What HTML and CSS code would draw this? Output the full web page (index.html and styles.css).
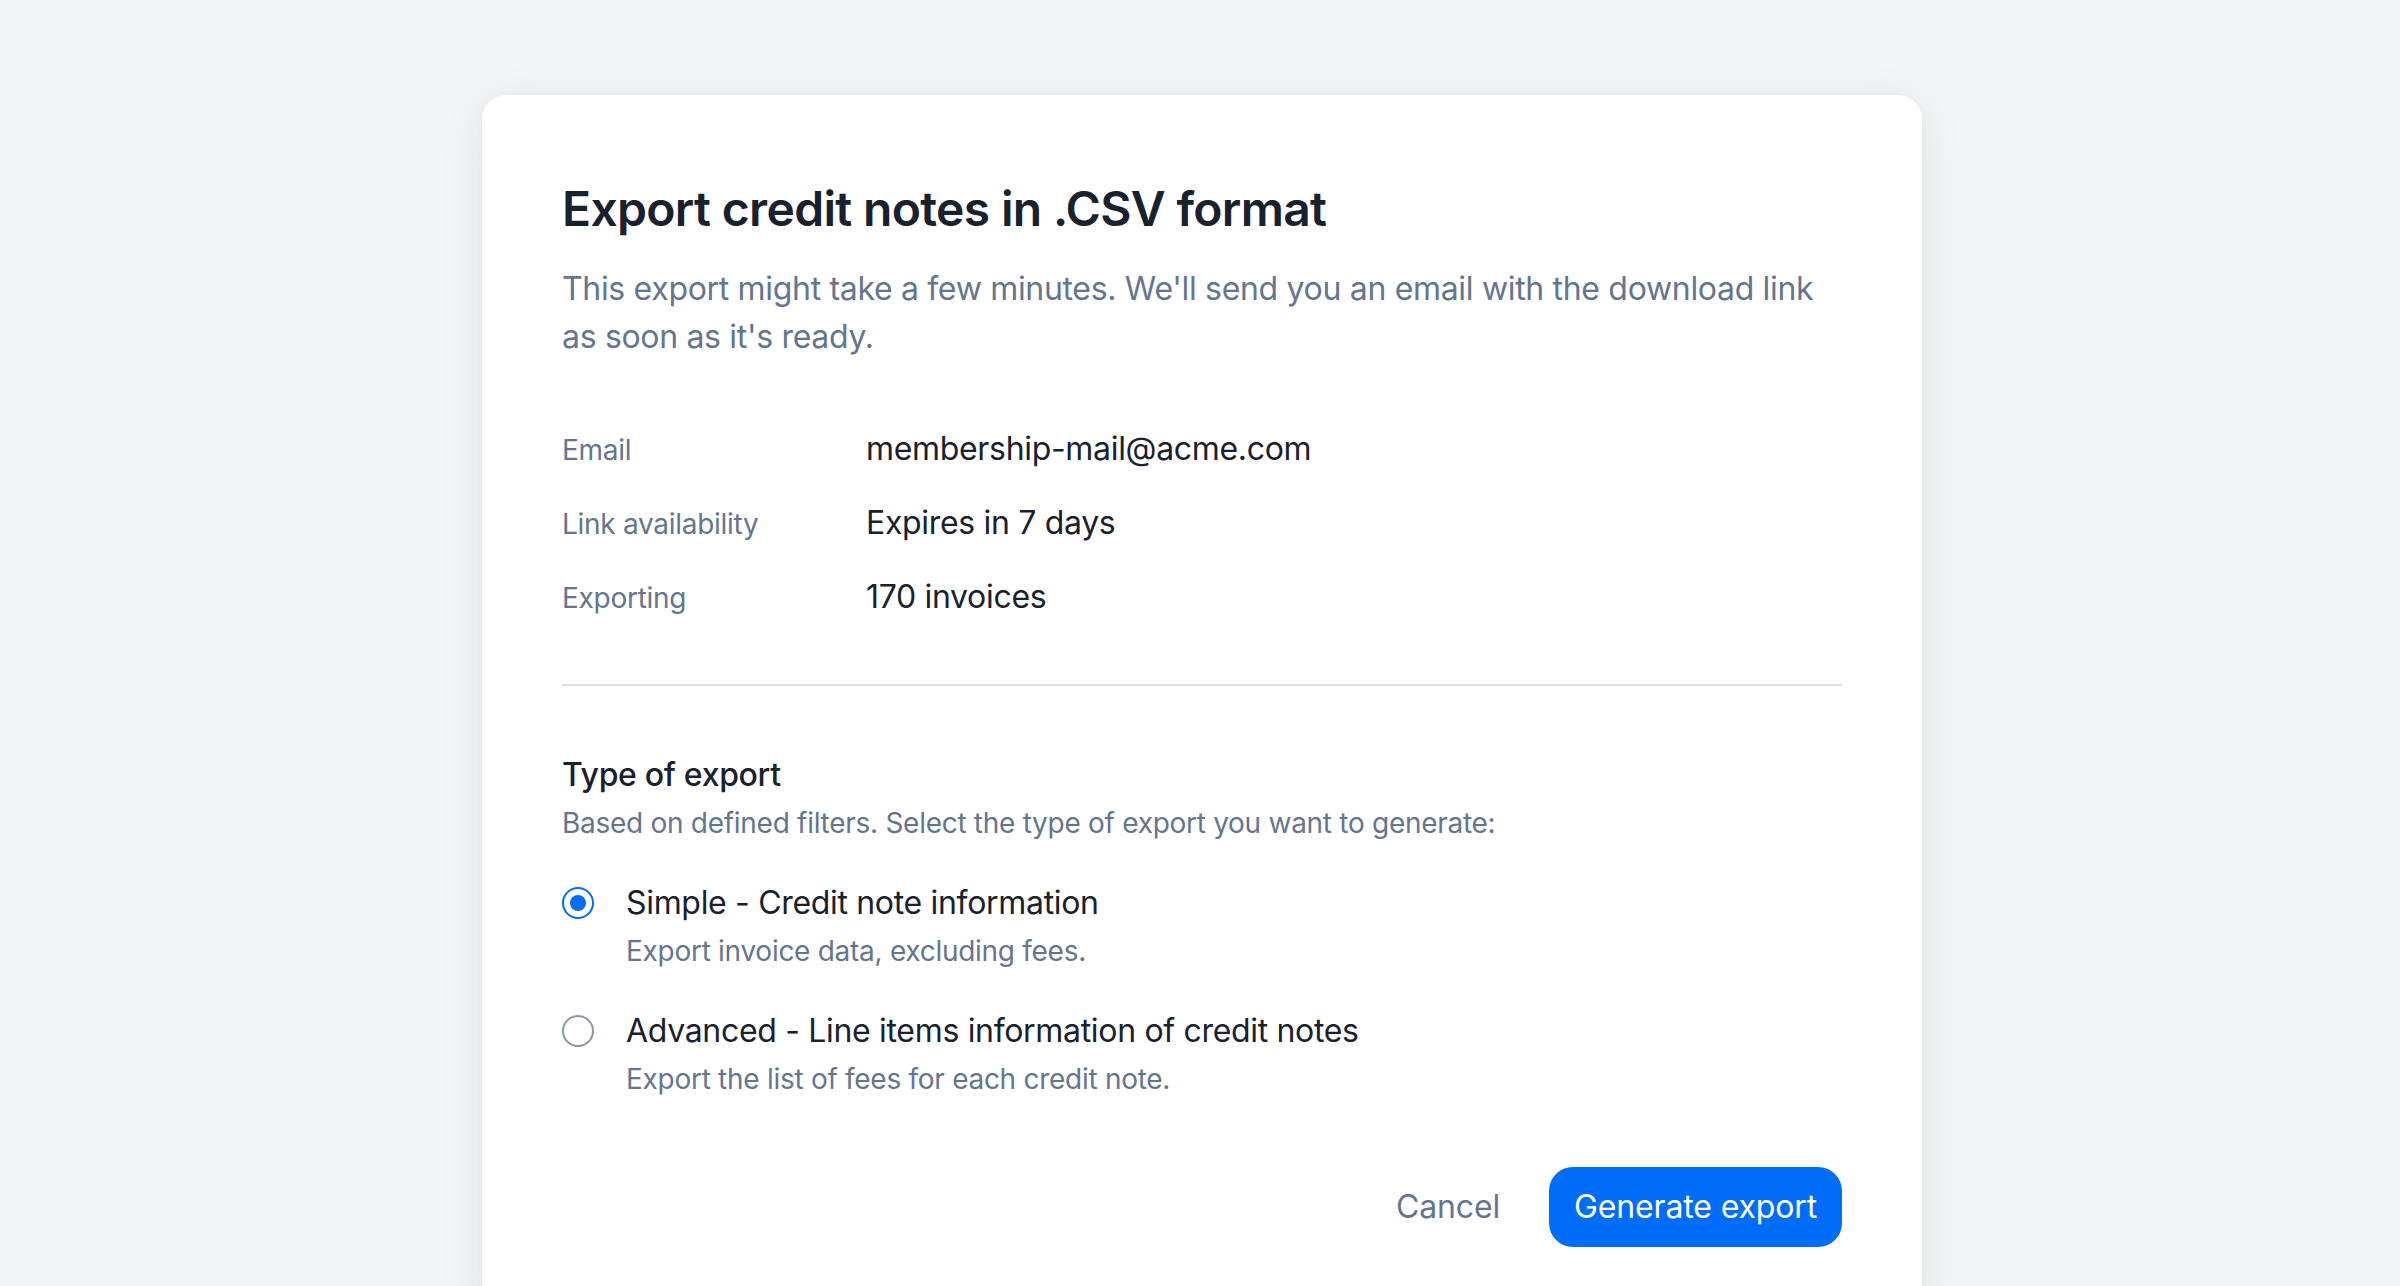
FILE: index.html
```html
<!DOCTYPE html>
<html lang="en">
<head>
<meta charset="utf-8">
<title>Export credit notes</title>
<link rel="stylesheet" href="styles.css">
</head>
<body>
<div class="page">
  <div class="modal" role="dialog">
    <h1 class="title">Export credit notes in .CSV format</h1>
    <p class="subtitle">This export might take a few minutes. We'll send you an email with the download link as soon as it's ready.</p>

    <div class="details">
      <div class="row"><span class="label">Email</span><span class="value">membership-mail@acme.com</span></div>
      <div class="row"><span class="label">Link availability</span><span class="value">Expires in 7 days</span></div>
      <div class="row"><span class="label">Exporting</span><span class="value">170 invoices</span></div>
    </div>

    <hr class="divider">

    <div class="section">
      <h2 class="section-title">Type of export</h2>
      <p class="section-desc">Based on defined filters. Select the type of export you want to generate:</p>

      <div class="options">
        <div class="option">
          <span class="radio checked"><span class="dot"></span></span>
          <div class="option-text">
            <div class="option-title">Simple - Credit note information</div>
            <div class="option-desc">Export invoice data, excluding fees.</div>
          </div>
        </div>
        <div class="option">
          <span class="radio"></span>
          <div class="option-text">
            <div class="option-title">Advanced - Line items information of credit notes</div>
            <div class="option-desc">Export the list of fees for each credit note.</div>
          </div>
        </div>
      </div>
    </div>

    <div class="actions">
      <button class="btn btn-ghost">Cancel</button>
      <button class="btn btn-primary">Generate export</button>
    </div>
  </div>
</div>
</body>
</html>
```

FILE: styles.css
```css
html, body {
  margin: 0;
  padding: 0;
}

body {
  background: #f3f4f6;
  font-family: Inter, "Noto Sans", "Liberation Sans", sans-serif;
  color: #19212e;
  height: 1286px;
  overflow: hidden;
}

.page {
  display: flex;
  justify-content: center;
  padding-top: 95px;
  padding-left: 4px;
}

.modal {
  width: 1440px;
  box-sizing: border-box;
  background: #ffffff;
  border-radius: 24px;
  padding: 82px 80px 80px;
  box-shadow: 0 8px 48px rgba(25, 33, 46, 0.07), 0 2px 8px rgba(25, 33, 46, 0.03);
}

.title {
  margin: 0;
  font-size: 48px;
  line-height: 64px;
  font-weight: 600;
  letter-spacing: -0.67px;
  color: #19212e;
}

.subtitle {
  margin: 24px 0 0;
  font-size: 32px;
  line-height: 48px;
  font-weight: 400;
  letter-spacing: -0.01em;
  color: #66758f;
}

.details {
  margin-top: 64px;
  display: flex;
  flex-direction: column;
  gap: 25px;
}

.row {
  display: grid;
  grid-template-columns: 304px 1fr;
  align-items: baseline;
}

.label {
  font-size: 28px;
  line-height: 48px;
  letter-spacing: -0.01em;
  color: #66758f;
}

.value {
  font-size: 32px;
  line-height: 48px;
  letter-spacing: -0.01em;
  color: #19212e;
}

.divider {
  margin: 62px 0 0;
  border: 0;
  height: 2px;
  background: #d9dee7;
}

.section {
  margin-top: 69px;
}

.section-title {
  margin: 0;
  font-size: 32px;
  line-height: 40px;
  font-weight: 500;
  letter-spacing: -0.01em;
  color: #19212e;
}

.section-desc {
  margin: 8px 0 0;
  font-size: 28px;
  line-height: 40px;
  letter-spacing: -0.01em;
  color: #66758f;
}

.options {
  margin-top: 36px;
  display: flex;
  flex-direction: column;
  gap: 36px;
}

.option {
  display: flex;
  align-items: flex-start;
  gap: 32px;
}

.radio {
  flex: 0 0 auto;
  width: 32px;
  height: 32px;
  margin-top: 8px;
  box-sizing: border-box;
  border: 2px solid #8c95a6;
  border-radius: 50%;
  display: flex;
  align-items: center;
  justify-content: center;
}

.radio.checked {
  border-color: #006cfa;
}

.dot {
  width: 16px;
  height: 16px;
  border-radius: 50%;
  background: #006cfa;
}

.option-title {
  font-size: 32px;
  line-height: 48px;
  letter-spacing: -0.01em;
  color: #19212e;
}

.option-desc {
  margin-top: 4px;
  font-size: 28px;
  line-height: 40px;
  letter-spacing: -0.01em;
  color: #66758f;
}

.actions {
  margin-top: 68px;
  display: flex;
  justify-content: flex-end;
  gap: 24px;
}

.btn {
  height: 80px;
  padding: 0 25px;
  border: 0;
  border-radius: 24px;
  font-family: Inter, "Noto Sans", "Liberation Sans", sans-serif;
  font-size: 32px;
  line-height: 48px;
  font-weight: 400;
  letter-spacing: -0.15px;
  cursor: pointer;
}

.btn-ghost {
  background: transparent;
  color: #66758f;
}

.btn-primary {
  background: #006cfa;
  color: #ffffff;
}
```
